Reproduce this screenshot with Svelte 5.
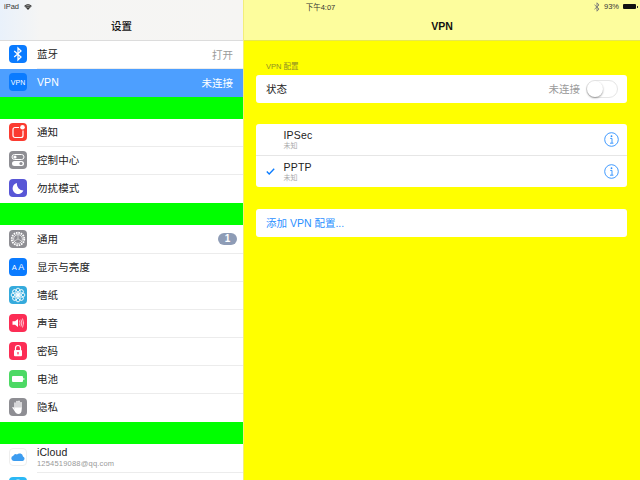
<script>
    const groups = [
        { gap: 0, rows: [
            { icon: 'bluetooth', color: '#0a7bff', label: '蓝牙', value: '打开' },
            { icon: 'vpn', color: '#0a7bff', label: 'VPN', value: '未连接', active: true }
        ] },
        { gap: 22, rows: [
            { icon: 'notify', color: '#fb3b30', label: '通知' },
            { icon: 'control', color: '#8e8e93', label: '控制中心' },
            { icon: 'moon', color: '#5856d6', label: '勿扰模式' }
        ] },
        { gap: 22, rows: [
            { icon: 'gear', color: '#8e8e93', label: '通用', badge: '1' },
            { icon: 'display', color: '#0a7bff', label: '显示与亮度' },
            { icon: 'wallpaper', color: '#35aadc', label: '墙纸' },
            { icon: 'sound', color: '#fc2d55', label: '声音' },
            { icon: 'lock', color: '#fc2d55', label: '密码' },
            { icon: 'battery', color: '#4cd964', label: '电池' },
            { icon: 'hand', color: '#8e8e93', label: '隐私' }
        ] },
        { gap: 22, rows: [
            { icon: 'cloud', color: '#fff', label: 'iCloud', sub: '1254519088@qq.com', tall: true },
            { icon: 'store', color: '#2bb8f5', label: '' }
        ] }
    ];

    const configs = [
        { name: 'IPSec', status: '未知', checked: false },
        { name: 'PPTP', status: '未知', checked: true }
    ];
</script>

<div class="page">
    <div class="status">
        <div class="status-left">
            <span>iPad</span>
            <svg width="8" height="6" viewBox="0 0 11 8">
                <path d="M5.5 8 L0.3 2.6 C3.2 -0.5 7.8 -0.5 10.7 2.6 Z" fill="#333" />
                <path d="M2 3.2 C4 1.6 7 1.6 9 3.2" stroke="#f5f5f3" stroke-width="0.7" fill="none" />
                <path d="M3.4 5 C4.6 4 6.4 4 7.6 5" stroke="#f5f5f3" stroke-width="0.7" fill="none" />
            </svg>
        </div>
        <div class="status-time">下午4:07</div>
        <div class="status-right">
            <svg width="6" height="10" viewBox="0 0 6 10">
                <path d="M0.5 2.8 L5 7 L3 9.2 V0.8 L5 3 L0.5 7.2" stroke="#777" stroke-width="0.9" fill="none" />
            </svg>
            <span>93%</span>
            <div class="battery"><div class="battery-fill"></div></div>
        </div>
    </div>

    <aside class="sidebar">
        <header class="side-head">设置</header>
        {#each groups as group}
            {#if group.gap}
                <div class="spacer"></div>
            {/if}
            <div class="group">
                {#each group.rows as row}
                    <div class="row" class:active={row.active} class:tall={row.tall}>
                        <div class="icon" class:bordered={row.icon === 'cloud'} style="background: {row.color}">
                            {#if row.icon === 'bluetooth'}
                                <svg viewBox="0 0 18 18"><path d="M5.2 6 L12 12 L9 15 V3 L12 6 L5.2 12" stroke="#fff" stroke-width="1.3" fill="none" /></svg>
                            {:else if row.icon === 'vpn'}
                                <span class="vpn-text">VPN</span>
                            {:else if row.icon === 'notify'}
                                <svg viewBox="0 0 18 18">
                                    <rect x="4" y="4.5" width="10" height="10" rx="2" stroke="#fff" stroke-width="1.2" fill="none" />
                                    <circle cx="13.5" cy="4.2" r="3.4" fill="#fb3b30" />
                                    <circle cx="13.5" cy="4.2" r="2.3" fill="#fff" />
                                </svg>
                            {:else if row.icon === 'control'}
                                <svg viewBox="0 0 18 18">
                                    <rect x="3" y="3.5" width="12" height="5" rx="2.5" stroke="#fff" stroke-width="1" fill="none" />
                                    <circle cx="6" cy="6" r="1.6" fill="#fff" />
                                    <rect x="3" y="10" width="12" height="5" rx="2.5" fill="#fff" />
                                    <circle cx="12" cy="12.5" r="1.6" fill="#8e8e93" />
                                </svg>
                            {:else if row.icon === 'moon'}
                                <svg viewBox="0 0 18 18"><path d="M8 4 A5.6 5.6 0 1 0 14.4 11.6 A6.5 6.5 0 0 1 8 4 Z" fill="#fff" /></svg>
                            {:else if row.icon === 'gear'}
                                <svg viewBox="0 0 18 18">
                                    <circle cx="9" cy="9" r="6.2" stroke="#fff" stroke-width="1.9" stroke-dasharray="1.6 0.8" fill="none" />
                                    <circle cx="9" cy="9" r="4.4" stroke="#fff" stroke-width="0.7" fill="none" />
                                    <path d="M9 9 L9 5 M9 9 L12.4 11 M9 9 L5.6 11" stroke="#fff" stroke-width="0.5" />
                                </svg>
                            {:else if row.icon === 'display'}
                                <span class="aa"><small>A</small>A</span>
                            {:else if row.icon === 'wallpaper'}
                                <svg viewBox="0 0 18 18">
                                    <g fill="none" stroke="#fff" stroke-width="0.9">
                                        <ellipse cx="9" cy="5.3" rx="2.2" ry="3.2" />
                                        <ellipse cx="9" cy="12.7" rx="2.2" ry="3.2" />
                                        <ellipse cx="5.3" cy="9" rx="3.2" ry="2.2" />
                                        <ellipse cx="12.7" cy="9" rx="3.2" ry="2.2" />
                                        <ellipse cx="6.4" cy="6.4" rx="2.2" ry="3.2" transform="rotate(-45 6.4 6.4)" />
                                        <ellipse cx="11.6" cy="6.4" rx="2.2" ry="3.2" transform="rotate(45 11.6 6.4)" />
                                        <ellipse cx="6.4" cy="11.6" rx="2.2" ry="3.2" transform="rotate(45 6.4 11.6)" />
                                        <ellipse cx="11.6" cy="11.6" rx="2.2" ry="3.2" transform="rotate(-45 11.6 11.6)" />
                                    </g>
                                </svg>
                            {:else if row.icon === 'sound'}
                                <svg viewBox="0 0 18 18">
                                    <path d="M3.5 7.2 H6 L9 5 V13 L6 10.8 H3.5 Z" fill="#fff" />
                                    <g fill="none" stroke="#fff" stroke-width="0.7">
                                        <path d="M10.5 6.5 Q11.6 9 10.5 11.5" />
                                        <path d="M12 5.5 Q13.6 9 12 12.5" />
                                        <path d="M13.5 4.5 Q15.6 9 13.5 13.5" />
                                    </g>
                                </svg>
                            {:else if row.icon === 'lock'}
                                <svg viewBox="0 0 18 18">
                                    <path d="M6.5 8 V6 A2.5 2.5 0 0 1 11.5 6 V8" stroke="#fff" stroke-width="1.2" fill="none" />
                                    <rect x="5" y="8" width="8" height="6.2" rx="1" fill="#fff" />
                                    <rect x="8.4" y="10" width="1.2" height="2.4" fill="#fc2d55" />
                                </svg>
                            {:else if row.icon === 'battery'}
                                <svg viewBox="0 0 18 18">
                                    <rect x="3" y="6" width="11" height="6" rx="1" fill="#fff" />
                                    <rect x="14.4" y="8" width="0.9" height="2" fill="#fff" />
                                </svg>
                            {:else if row.icon === 'hand'}
                                <svg viewBox="0 0 18 18">
                                    <g stroke="#fff" stroke-width="1.3" stroke-linecap="round">
                                        <path d="M6 10 V5" />
                                        <path d="M8 10 V3.4" />
                                        <path d="M10 10 V3.2" />
                                        <path d="M12 10 V4.6" />
                                        <path d="M4 9.6 L6 12.5" />
                                    </g>
                                    <path d="M5.3 9.5 H12.7 V11.5 C12.7 14.5 11.3 16 9.3 16 C7.6 16 6.7 15 5.8 13.5 Z" fill="#fff" />
                                </svg>
                            {:else if row.icon === 'cloud'}
                                <svg viewBox="0 0 18 18">
                                    <path d="M4.8 13 A2.7 2.7 0 0 1 4.3 7.7 A3 3 0 0 1 8 6.4 A3.6 3.6 0 0 1 14 8.4 A2.4 2.4 0 0 1 13.6 13 Z" fill="#3c9cf0" />
                                </svg>
                            {:else if row.icon === 'store'}
                                <svg viewBox="0 0 18 18"><circle cx="9" cy="9" r="6" stroke="#fff" stroke-width="1" fill="none" /></svg>
                            {/if}
                        </div>
                        <div class="row-body">
                            <div class="row-text">
                                <div class="label">{row.label}</div>
                                {#if row.sub}
                                    <div class="sub">{row.sub}</div>
                                {/if}
                            </div>
                            {#if row.value}
                                <span class="value">{row.value}</span>
                            {/if}
                            {#if row.badge}
                                <span class="badge">{row.badge}</span>
                            {/if}
                        </div>
                    </div>
                {/each}
            </div>
        {/each}
    </aside>

    <main class="detail">
        <header class="detail-head">VPN</header>
        <div class="detail-body">
            <div class="section-title">VPN 配置</div>
            <div class="card state">
                <span class="label">状态</span>
                <span class="state-value">未连接</span>
                <div class="switch"><div class="knob"></div></div>
            </div>

            <div class="card list">
                {#each configs as config}
                    <div class="config">
                        <div class="check">
                            {#if config.checked}
                                <svg width="9" height="7" viewBox="0 0 9 7"><path d="M0.8 3.6 L3.2 6 L8.2 0.8" stroke="#0a7bff" stroke-width="1.4" fill="none" /></svg>
                            {/if}
                        </div>
                        <div class="config-main">
                            <div class="config-text">
                                <div class="config-name">{config.name}</div>
                                <div class="config-status">{config.status}</div>
                            </div>
                            <svg class="info" width="15" height="15" viewBox="0 0 15 15">
                                <circle cx="7.5" cy="7.5" r="6.8" stroke="#2b8fff" stroke-width="0.9" fill="none" />
                                <circle cx="7.5" cy="4.2" r="0.9" fill="#2b8fff" />
                                <path d="M6.2 6.4 H8 V11 M6 11.2 H9.4" stroke="#2b8fff" stroke-width="0.9" fill="none" />
                            </svg>
                        </div>
                    </div>
                {/each}
            </div>

            <div class="card add">添加 VPN 配置...</div>
        </div>
    </main>
</div>

<style>
    :global(body) {
        margin: 0;
    }

    .page {
        position: relative;
        display: flex;
        width: 640px;
        height: 480px;
        overflow: hidden;
        font-family: "Liberation Sans", "Noto Sans CJK SC", sans-serif;
        color: #222;
    }

    .status {
        position: absolute;
        top: 0;
        left: 0;
        right: 0;
        height: 13px;
        display: grid;
        grid-template-columns: 1fr auto 1fr;
        align-items: center;
        padding: 0 3px 0 4px;
        font-size: 7.5px;
        color: #333;
    }

    .status-left {
        display: flex;
        align-items: center;
        gap: 5px;
    }

    .status-right {
        display: flex;
        align-items: center;
        justify-content: flex-end;
        gap: 4px;
    }

    .battery {
        position: relative;
        width: 13px;
        height: 5px;
        background: #111;
        border-radius: 1px;
        margin-right: 1px;
    }

    .battery-fill {
        position: absolute;
        top: 1.5px;
        right: -1.5px;
        width: 1px;
        height: 2px;
        background: #333;
    }

    .sidebar {
        width: 243px;
        flex: none;
        background: #fff;
        border-right: 1px solid #f2ee7a;
    }

    .side-head {
        height: 41px;
        box-sizing: border-box;
        padding-top: 14px;
        text-align: center;
        font-size: 10.5px;
        line-height: 25px;
        font-weight: 500;
        color: #111;
        background: linear-gradient(90deg, #e9f1fb 0, #f5f5f4 40px, #f6f5f3 100%);
        border-bottom: 1px solid #dcdcdc;
    }

    .spacer {
        height: 22px;
        background: #00ff00;
    }

    .row {
        display: flex;
        align-items: center;
        height: 28.1px;
        padding-left: 9px;
        background: #fff;
    }

    .row.tall {
        height: 28.5px;
    }

    .row.active {
        background: #4d9fff;
        color: #fff;
    }

    .icon {
        width: 18px;
        height: 18px;
        flex: none;
        margin-bottom: 2px;
        border-radius: 4px;
        display: flex;
        align-items: center;
        justify-content: center;
    }

    .icon.bordered {
        box-sizing: border-box;
        border: 1px solid #eee;
    }

    .icon svg {
        width: 18px;
        height: 18px;
        flex: none;
    }

    .vpn-text {
        font-size: 7px;
        color: #fff;
    }

    .aa {
        font-size: 9px;
        color: #fff;
        letter-spacing: 1.5px;
        margin-right: -1.5px;
    }

    .aa small {
        font-size: 7.5px;
    }

    .row-body {
        flex: 1;
        align-self: stretch;
        margin-left: 10px;
        padding: 0 10px 1px 0;
        display: flex;
        align-items: center;
        justify-content: space-between;
        border-bottom: 1px solid #ececec;
    }

    .group .row:last-child .row-body,
    .row.active .row-body {
        border-bottom: 1px solid transparent;
    }

    .label {
        font-size: 10.5px;
        line-height: 12px;
        letter-spacing: 0.1px;
    }

    .sub {
        font-size: 7.5px;
        line-height: 11px;
        color: #999;
        letter-spacing: 0.2px;
    }

    .value {
        font-size: 10.5px;
        color: #9a9a9a;
    }

    .row.active .value {
        color: #fff;
    }

    .badge {
        width: 19px;
        height: 12px;
        margin-right: -4px;
        border-radius: 6px;
        background: #8e9cb6;
        color: #fff;
        font-size: 10px;
        font-weight: 700;
        line-height: 12px;
        text-align: center;
    }

    .detail {
        flex: 1;
        background: #ffff00;
    }

    .detail-head {
        height: 41px;
        box-sizing: border-box;
        padding-top: 14px;
        text-align: center;
        font-size: 10.5px;
        line-height: 25px;
        font-weight: 700;
        color: #111;
        background: #fdfd9d;
        border-bottom: 1px solid #e8e84e;
    }

    .detail-body {
        padding: 20px 13px 0 12px;
    }

    .section-title {
        height: 14px;
        padding: 1px 0 0 10px;
        box-sizing: border-box;
        font-size: 7.5px;
        line-height: 10px;
        color: #8f8f24;
    }

    .card {
        background: #fff;
        border-radius: 3px;
    }

    .state {
        height: 28px;
        display: flex;
        align-items: center;
        padding: 0 9px 0 10px;
    }

    .state .label,
    .state-value {
        margin-bottom: 1px;
    }

    .state-value {
        margin-left: auto;
        font-size: 10.5px;
        color: #9a9a9a;
    }

    .switch {
        width: 32px;
        height: 18px;
        box-sizing: border-box;
        margin-left: 6px;
        border: 1px solid #e6e6e6;
        border-radius: 9px;
    }

    .knob {
        width: 16px;
        height: 16px;
        border-radius: 50%;
        background: #fff;
        box-shadow: 0 1px 2px rgba(0, 0, 0, 0.4);
    }

    .list {
        margin-top: 21px;
        height: 63px;
    }

    .config {
        display: flex;
        height: 31px;
        padding-left: 10px;
    }

    .check {
        width: 17.5px;
        flex: none;
        display: flex;
        align-items: center;
    }

    .config-main {
        flex: 1;
        display: flex;
        align-items: center;
        justify-content: space-between;
        padding-right: 8px;
    }

    .config:first-child {
        border-bottom: 1px solid #e6e6e6;
    }

    .config-name {
        font-size: 10.5px;
        line-height: 12px;
        letter-spacing: 0.2px;
    }

    .config-status {
        font-size: 7px;
        line-height: 10px;
        color: #aaa;
    }

    .add {
        margin-top: 22px;
        height: 28px;
        padding-left: 10px;
        font-size: 10.5px;
        line-height: 28px;
        color: #2b8fff;
    }
</style>
